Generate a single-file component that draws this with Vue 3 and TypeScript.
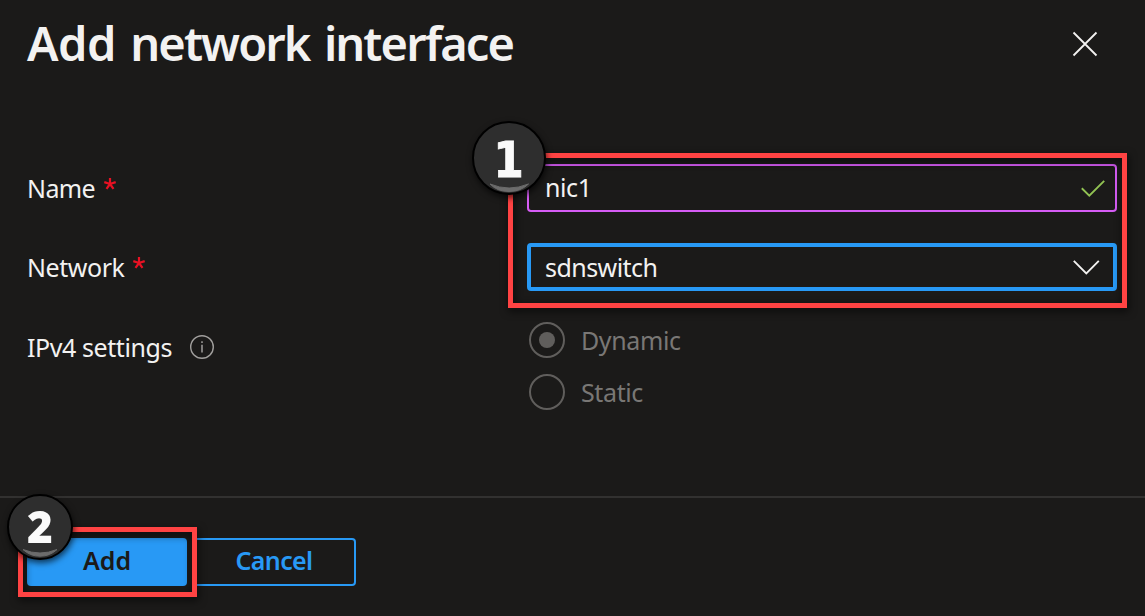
<script setup lang="ts">
import { ref } from 'vue'

const name = ref('nic1')
const network = ref('sdnswitch')
const mode = ref('Dynamic')
const modes: string[] = ['Dynamic', 'Static']
</script>

<template>
  <main class="panel">
    <header class="header">
      <h1 class="title"><span class="title-lead">Add</span> network interface</h1>
      <svg class="close" viewBox="0 0 26 26" width="26" height="26">
        <path d="M1.5 1.5 24.5 24.5M24.5 1.5 1.5 24.5" fill="none" stroke="#f3f2f1" stroke-width="1.8" />
      </svg>
    </header>

    <section class="form">
      <div class="row">
        <div class="label"><span class="t-name">Name</span><svg class="star" viewBox="-6 -6 12 12" width="12" height="12"><path d="M0 0V-6M0 0 5.7-1.9M0 0 3.5 4.9M0 0-3.5 4.9M0 0-5.7-1.9" stroke="#e81123" stroke-width="2.2" /></svg></div>
        <div class="field valid">
          <span class="t-nic">{{ name }}</span>
          <svg class="check" viewBox="0 0 24 17" width="24" height="17"><path d="M.8 8.2 8.3 15.6 23.2.8" fill="none" stroke="#92c353" stroke-width="1.9" /></svg>
        </div>
      </div>
      <div class="row">
        <div class="label"><span class="t-network">Network</span><svg class="star" viewBox="-6 -6 12 12" width="12" height="12"><path d="M0 0V-6M0 0 5.7-1.9M0 0 3.5 4.9M0 0-3.5 4.9M0 0-5.7-1.9" stroke="#e81123" stroke-width="2.2" /></svg></div>
        <div class="field focused">
          <span class="t-switch">{{ network }}</span>
          <svg class="chevron" viewBox="0 0 27 15" width="27" height="15"><path d="M.8.8 13.3 13.3 25.8.8" fill="none" stroke="#f3f2f1" stroke-width="1.9" /></svg>
        </div>
      </div>
      <div class="row radios-row">
        <div class="label ip">
          <span class="t-ip">IPv4 settings</span>
          <svg class="info" viewBox="0 0 24 24" width="24" height="24">
            <circle cx="12" cy="12" r="11.3" fill="none" stroke="#a19f9d" stroke-width="1.4" />
            <path d="M12 9.8V17.5M12 6.3V8" stroke="#a19f9d" stroke-width="1.5" />
          </svg>
        </div>
        <div class="radios">
          <div v-for="m in modes" :key="m" class="radio">
            <span class="ring"><span v-if="m === mode" class="dot"></span></span>
            <span class="t-radio">{{ m }}</span>
          </div>
        </div>
      </div>
    </section>

    <footer class="footer">
      <button class="btn primary">Add</button>
      <button class="btn secondary">Cancel</button>
    </footer>

    <div class="highlight fields-highlight"></div>
    <div class="highlight add-highlight"></div>
    <svg class="badge badge-one" viewBox="0 0 74 74" width="74" height="74">
      <circle cx="37" cy="37" r="36" fill="#2e2e2e" stroke="#000" stroke-width="2" />
      <path d="M18 63Q37 71 56.5 63Q49 70.5 37 70.5T18 63Z" fill="#6c6c6c" stroke="#6c6c6c" stroke-width="1" />
      <text x="37" y="56" text-anchor="middle" class="digit one">1</text>
    </svg>
    <svg class="badge badge-two" viewBox="0 0 66 66" width="66" height="66">
      <circle cx="33" cy="33" r="32" fill="#2e2e2e" stroke="#000" stroke-width="2" />
      <path d="M16 55.5Q33 62.5 50 55.5Q43 62.2 33 62.2T16 55.5Z" fill="#6c6c6c" stroke="#6c6c6c" stroke-width="1" />
      <text x="33" y="49" text-anchor="middle" class="digit">2</text>
    </svg>
  </main>
</template>

<style>
html, body { margin: 0; background: #1b1a19; overflow: hidden; }
</style>

<style scoped>
.panel {
  position: relative;
  box-sizing: border-box;
  width: 1145px;
  height: 616px;
  overflow: hidden;
  background: #1b1a19;
  color: #f3f2f1;
  font: 25px/34px "Noto Sans", sans-serif;
  white-space: nowrap;
}
.header {
  display: flex;
  align-items: center;
  justify-content: space-between;
  height: 88px;
  box-sizing: border-box;
  padding: 0 47px 0 27px;
}
.title { margin: 0; padding-bottom: 3px; font-size: 47px; line-height: 60px; font-weight: 600; letter-spacing: -1.9px; word-spacing: 4px; }
.title-lead { letter-spacing: -.5px; }
.close { display: block; }
.form { height: 410px; box-sizing: border-box; padding: 76px 28px 0 27px; border-bottom: 2px solid #323130; }
.row { display: grid; grid-template-columns: 500px 590px; height: 48px; margin-bottom: 31px; align-items: center; }
.label { display: flex; align-items: center; }
.star { margin: -9px 0 0 9px; }
.t-name { letter-spacing: -.6px; }
.t-network { letter-spacing: -.45px; }
.t-ip { letter-spacing: -.42px; }
.t-switch { letter-spacing: -.55px; }
.t-nic { letter-spacing: -.4px; padding-bottom: 2px; }
.t-radio { letter-spacing: -.38px; }
.field {
  box-sizing: border-box;
  height: 48px;
  display: flex;
  align-items: center;
  justify-content: space-between;
  border-radius: 4px;
}
.valid { border: 2px solid #d65cf5; padding: 0 10px 0 16px; }
.focused { border: 4px solid #2899f5; padding: 0 13px 0 14px; }
.radios-row { height: 88px; align-items: start; margin: 0; }
.ip { padding-top: 8px; }
.info { margin: -1px 0 0 18px; }
.radios { display: grid; gap: 16px; padding-left: 2px; }
.radio { display: flex; align-items: center; gap: 16px; height: 36px; color: #797775; }
.ring { display: grid; place-items: center; width: 36px; height: 36px; box-sizing: border-box; border: 2px solid #605e5c; border-radius: 50%; }
.dot { width: 16px; height: 16px; border-radius: 50%; background: #605e5c; }
.footer { display: flex; gap: 5px; padding: 40px 27px 0; }
.btn { box-sizing: border-box; width: 160px; height: 48px; padding: 0 0 4px; border-radius: 4px; font: 600 25px/34px "Noto Sans", sans-serif; }
.primary { background: #2899f5; color: #1b1a19; border: 0; }
.secondary { width: 164px; background: transparent; color: #2899f5; border: 2px solid #2899f5; letter-spacing: -.6px; }
.highlight { position: absolute; box-sizing: border-box; border: 5px solid #ff4343; filter: drop-shadow(1px 3px 4px rgba(0, 0, 0, .75)); }
.fields-highlight { left: 508px; top: 153px; width: 619px; height: 155px; }
.add-highlight { left: 18px; top: 527px; width: 179px; height: 70px; }
.badge { position: absolute; overflow: visible; filter: drop-shadow(1px 3px 3px rgba(0, 0, 0, .65)); }
.badge-one { left: 472px; top: 121px; }
.badge-two { left: 7px; top: 494px; }
.digit { font: 900 44px "Noto Sans", sans-serif; fill: #fafafa; }
.one { font: 700 50px "DejaVu Sans", sans-serif; stroke: #fafafa; stroke-width: .8px; transform: translateX(4px) scaleX(.88); }
</style>
